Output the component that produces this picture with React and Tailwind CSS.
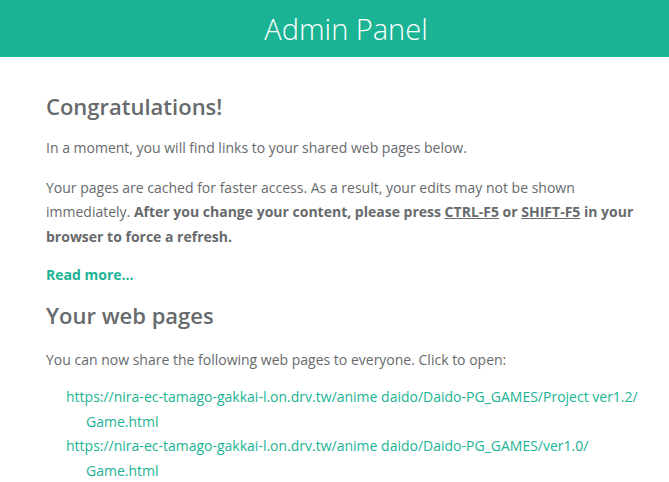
export default function App() {
  const links = [
    ["https://nira-ec-tamago-gakkai-l.on.drv.tw/anime daido/Daido-PG_GAMES/Project ver1.2/", "Game.html"],
    ["https://nira-ec-tamago-gakkai-l.on.drv.tw/anime daido/Daido-PG_GAMES/ver1.0/", "Game.html"],
  ];

  return (
    <div className="min-h-screen bg-white font-['Open_Sans',sans-serif] text-[#676a6c]">
      {/* Header */}
      <div className="h-[57px] bg-[#1ab394] flex items-center justify-center pl-[23px]">
        <h1 className="text-[29px] font-light text-white leading-none">Admin Panel</h1>
      </div>

      <div className="pl-[46px] pr-[20px] pt-[37px] text-[14px] leading-[1.75]">
        <h2 className="text-[22px] font-semibold leading-[1.1] mb-[18px]">Congratulations!</h2>
        <p className="mb-[15px]">In a moment, you will find links to your shared web pages below.</p>
        <p className="mb-[14px]">
          Your pages are cached for faster access. As a result, your edits may not be shown
          immediately.{" "}
          <strong className="font-bold">
            After you change your content, please press <u>CTRL-F5</u> or <u>SHIFT-F5</u> in your
            browser to force a refresh.
          </strong>
        </p>
        <p className="mb-[15px]">
          <a href="#" className="font-bold text-[#1ab394]">Read more...</a>
        </p>

        <h2 className="text-[22px] font-semibold leading-[1.1] mb-[21px]">Your web pages</h2>
        <p className="mb-[13px]">You can now share the following web pages to everyone. Click to open:</p>
        <ul className="pl-[40px]">
          {links.map(([path, file]) => (
            <li key={path} className="-indent-[20px]">
              <a href="#" className="text-[#1ab394]">
                {path}<wbr />{file}
              </a>
            </li>
          ))}
        </ul>
      </div>
    </div>
  );
}
